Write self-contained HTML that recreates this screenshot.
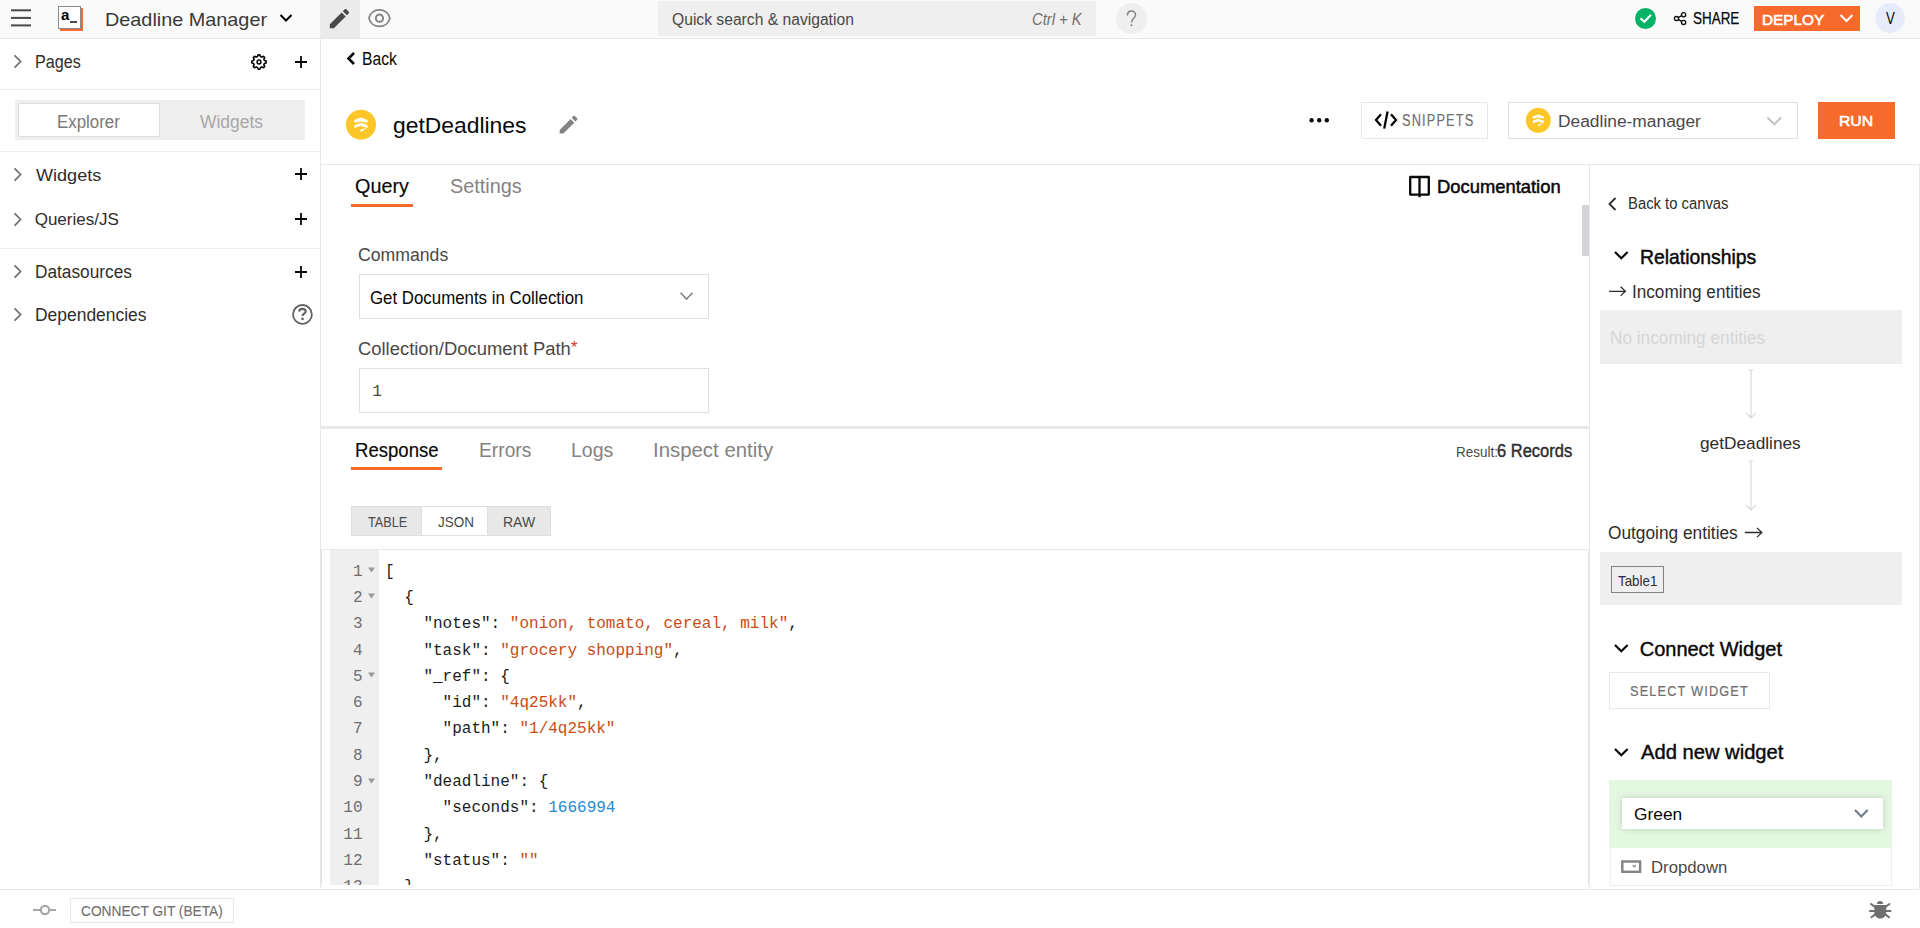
<!DOCTYPE html><html><head><meta charset='utf-8'><style>
html,body{margin:0;padding:0;width:1920px;height:928px;overflow:hidden;background:#fff;font-family:"Liberation Sans",sans-serif}
.b{position:absolute;display:block}
.t{position:absolute;white-space:pre}
</style></head><body>
<div class='b' style='left:0px;top:0px;width:1920px;height:38px;background:#fafafa'></div>
<div class='b' style='left:0px;top:38px;width:1920px;height:1px;background:#e8e8e8'></div>
<div class='b' style='left:320px;top:0px;width:40px;height:38px;background:#ebebeb'></div>
<div class='b' style='left:658px;top:1px;width:438px;height:35px;background:#efefef'></div>
<svg class='b' style='left:1116px;top:3px' width='31' height='31' viewBox='0 0 31 31'><circle cx='15.5' cy='15.5' r='15.5' fill='#efefef'/></svg>
<div class='b' style='left:320px;top:39px;width:1px;height:849px;background:#e8e8e8'></div>
<div class='b' style='left:0px;top:89px;width:320px;height:1px;background:#efefef'></div>
<div class='b' style='left:15px;top:100px;width:290px;height:40px;background:#efefef'></div>
<div class='b' style='left:18px;top:103px;width:142px;height:34px;background:#fff;box-sizing:border-box;border:1px solid #e0dede'></div>
<div class='b' style='left:0px;top:151px;width:320px;height:1px;background:#efefef'></div>
<div class='b' style='left:0px;top:248px;width:320px;height:1px;background:#efefef'></div>
<div class='b' style='left:321px;top:164px;width:1599px;height:1px;background:#e8e8e8'></div>
<div class='b' style='left:1589px;top:165px;width:1px;height:724px;background:#e8e8e8'></div>
<div class='b' style='left:1919px;top:165px;width:1px;height:724px;background:#e8e8e8'></div>
<div class='b' style='left:1582px;top:205px;width:7px;height:51px;background:#d4d4d9'></div>
<div class='b' style='left:351px;top:204px;width:62px;height:3px;background:#f86a2b'></div>
<div class='b' style='left:359px;top:274px;width:350px;height:45px;box-sizing:border-box;border:1px solid #e0dede'></div>
<div class='b' style='left:359px;top:368px;width:350px;height:45px;box-sizing:border-box;border:1px solid #e0dede'></div>
<div class='b' style='left:321px;top:426px;width:1268px;height:3px;background:#e8e8e8'></div>
<div class='b' style='left:351px;top:467px;width:91px;height:3px;background:#f86a2b'></div>
<div class='b' style='left:351px;top:506px;width:200px;height:30px;background:#e8e8e8;box-sizing:border-box;border:1px solid #e0dede'></div>
<div class='b' style='left:422px;top:507px;width:65px;height:28px;background:#fff'></div>
<div class='b' style='left:421px;top:507px;width:1px;height:28px;background:#e0dede'></div>
<div class='b' style='left:487px;top:507px;width:1px;height:28px;background:#e0dede'></div>
<div class='b' style='left:321px;top:549px;width:1268px;height:1px;background:#e8e8e8'></div>
<div class='b' style='left:330px;top:550px;width:49px;height:335px;background:#efefef'></div>
<div class='b' style='left:0px;top:889px;width:1920px;height:1px;background:#e8e8e8'></div>
<div class='b' style='left:321px;top:550px;width:1px;height:335px;background:#e4e4e8'></div>
<div class='b' style='left:1588px;top:550px;width:1px;height:335px;background:#e4e4e8'></div>
<div class='b' style='left:1361px;top:102px;width:127px;height:37px;box-sizing:border-box;border:1px solid #e8e8e8'></div>
<div class='b' style='left:1508px;top:102px;width:290px;height:37px;box-sizing:border-box;border:1px solid #e0dede'></div>
<div class='b' style='left:1818px;top:102px;width:77px;height:37px;background:#f86a2b'></div>
<div class='b' style='left:1754px;top:6px;width:106px;height:25px;background:#f86a2b'></div>
<svg class='b' style='left:1875px;top:3px' width='30' height='30' viewBox='0 0 30 30'><circle cx='15' cy='15' r='15' fill='#e8ecfa'/></svg>
<div class='b' style='left:1600px;top:310px;width:302px;height:54px;background:#efefef'></div>
<div class='b' style='left:1600px;top:552px;width:302px;height:53px;background:#efefef'></div>
<div class='b' style='left:1611px;top:566px;width:53px;height:27px;box-sizing:border-box;border:1px solid #858282'></div>
<div class='b' style='left:1609px;top:672px;width:161px;height:37px;box-sizing:border-box;border:1px solid #e8e8e8'></div>
<div class='b' style='left:1609px;top:780px;width:283px;height:68px;background:#e4f7e0'></div>
<div class='b' style='left:1622px;top:798px;width:261px;height:31px;background:#fff;box-shadow:0 0 7px rgba(0,0,0,0.16)'></div>
<div class='b' style='left:1610px;top:848px;width:282px;height:38px;box-sizing:border-box;border:1px solid #efefef;border-top:none;background:#fff'></div>
<div class='b' style='left:70px;top:898px;width:164px;height:25px;box-sizing:border-box;border:1px solid #e8e8e8'></div>
<svg class='b' style='left:11px;top:9px' width='20' height='18' viewBox='0 0 20 18'><rect x='0' y='0.3' width='20' height='2' fill='#4b4848'/><rect x='0' y='7.9' width='20' height='2' fill='#4b4848'/><rect x='0' y='15.4' width='20' height='2' fill='#4b4848'/></svg>
<div class='b' style='left:60px;top:8px;width:23px;height:23px;background:#f86a2b'></div>
<div class='b' style='left:58px;top:6px;width:23px;height:23px;background:#fff;box-sizing:border-box;border:1px solid #8a8888'></div>
<div class='t' style='left:61px;top:7px;font:bold 15px/15px "Liberation Sans";color:#000'>a</div>
<div class='b' style='left:70px;top:21px;width:7px;height:2px;background:#4b4848'></div>
<svg class='b' style='left:279px;top:13px' width='14' height='10' viewBox='0 0 14 10'><path d='M1.5 2 L7 7.5 L12.5 2' fill='none' stroke='#000' stroke-width='2'/></svg>
<svg class='b' style='left:320px;top:0px' width='40' height='38' viewBox='320 0 40 38'><g transform='translate(326.6,5.8) scale(1.073)' fill='#4b4848'><path d='M3 17.25V21h3.75L17.81 9.94l-3.75-3.75L3 17.25z'/><path d='M20.71 7.04c.39-.39.39-1.02 0-1.41l-2.34-2.34c-.39-.39-1.02-.39-1.41 0l-1.83 1.83 3.75 3.75 1.83-1.83z'/></g></svg>
<svg class='b' style='left:367px;top:7px' width='25' height='23' viewBox='0 0 25 23'><path d='M1.9 11.15 C4.6 0.15 20.2 0.15 22.9 11.15 C20.2 22.15 4.6 22.15 1.9 11.15 Z' fill='none' stroke='#858282' stroke-width='1.8'/><circle cx='12.45' cy='11.15' r='3.6' fill='none' stroke='#858282' stroke-width='2'/></svg>
<svg class='b' style='left:1110px;top:0px' width='40' height='38' viewBox='1110 0 40 38'><path d='M1127.4 15.6 C1127.4 12.4 1129.4 10.9 1131.4 10.9 C1133.6 10.9 1135.5 12.5 1135.5 14.9 C1135.5 17.9 1131.5 18.8 1131.5 22.4' fill='none' stroke='#858282' stroke-width='1.5'/><circle cx='1131.5' cy='25.3' r='1.05' fill='#858282'/></svg>
<svg class='b' style='left:1634px;top:7px' width='23' height='23' viewBox='0 0 23 23'><circle cx='11.5' cy='11.5' r='10.5' fill='#03b365'/><path d='M6.5 11.3 L10.4 14.8 L17 7.8' fill='none' stroke='#fff' stroke-width='2.2'/></svg>
<svg class='b' style='left:1672px;top:11px' width='16' height='16' viewBox='0 0 16 16'><g fill='none' stroke='#090707' stroke-width='1.35'><circle cx='11.6' cy='3.7' r='2.1'/><circle cx='4.5' cy='7.55' r='2.1'/><circle cx='11.6' cy='11.4' r='2.1'/><path d='M6.4 6.5 L9.7 4.7 M6.4 8.6 L9.7 10.4'/></g></svg>
<svg class='b' style='left:1839px;top:13px' width='15' height='10' viewBox='0 0 15 10'><path d='M1.5 2 L7.5 8 L13.5 2' fill='none' stroke='#fff' stroke-width='2'/></svg>
<svg class='b' style='left:345px;top:51px' width='12' height='15' viewBox='0 0 12 15'><path d='M9 2 L3.5 7.5 L9 13' fill='none' stroke='#090707' stroke-width='2.6'/></svg>
<svg class='b' style='left:344px;top:108px' width='34' height='34' viewBox='0 0 34 34'><circle cx='17' cy='16.7' r='15' fill='#ffc629'/><g transform='translate(2.0,1.6999999999999993) scale(1.0)' fill='#fff'><path d='M8.3 10.4 L15 7.9 L21.6 10.4 L21.6 13.1 L15 11.7 L8.3 13.1 Z'/><path d='M8.3 15.6 L15 13.1 L21.6 15.6 L21.6 18.4 L15 16.4 L8.3 18.4 Z'/><path d='M14.7 19.6 L20.6 18.6 L14.7 22.5 Z'/></g></svg>
<svg class='b' style='left:1524px;top:106px' width='29' height='29' viewBox='0 0 29 29'><circle cx='14.3' cy='14.3' r='12.5' fill='#ffc629'/><g transform='translate(1.8000000000000007,1.8000000000000007) scale(0.8333333333333334)' fill='#fff'><path d='M8.3 10.4 L15 7.9 L21.6 10.4 L21.6 13.1 L15 11.7 L8.3 13.1 Z'/><path d='M8.3 15.6 L15 13.1 L21.6 15.6 L21.6 18.4 L15 16.4 L8.3 18.4 Z'/><path d='M14.7 19.6 L20.6 18.6 L14.7 22.5 Z'/></g></svg>
<svg class='b' style='left:550px;top:108px' width='36' height='32' viewBox='550 108 36 32'><g transform='translate(556.7,112.8) scale(0.99)' fill='#858282'><path d='M3 17.25V21h3.75L17.81 9.94l-3.75-3.75L3 17.25z'/><path d='M20.71 7.04c.39-.39.39-1.02 0-1.41l-2.34-2.34c-.39-.39-1.02-.39-1.41 0l-1.83 1.83 3.75 3.75 1.83-1.83z'/></g></svg>
<svg class='b' style='left:1309px;top:117px' width='22' height='7' viewBox='0 0 22 7'><circle cx='2.6' cy='3.3' r='2.2' fill='#090707'/><circle cx='10.2' cy='3.3' r='2.2' fill='#090707'/><circle cx='17.8' cy='3.3' r='2.2' fill='#090707'/></svg>
<svg class='b' style='left:1374px;top:110px' width='24' height='20' viewBox='0 0 24 20'><path d='M7 4.2 L2 10 L7 15.8 M17 4.2 L22 10 L17 15.8' fill='none' stroke='#090707' stroke-width='2.3'/><path d='M13.6 1.5 L10.2 18.6' stroke='#090707' stroke-width='2.3'/></svg>
<svg class='b' style='left:1766px;top:115px' width='17' height='12' viewBox='0 0 17 12'><path d='M1.5 2.5 L8.3 9.3 L15 2.5' fill='none' stroke='#c4c4c4' stroke-width='2.2'/></svg>
<svg class='b' style='left:1408px;top:175px' width='24' height='23' viewBox='0 0 24 23'><path d='M2.2 2 H11.5 V19.6 H2.2 Z M11.5 2 H20.8 V19.6 H11.5' fill='none' stroke='#090707' stroke-width='2.3' stroke-linejoin='round'/><path d='M11.5 19 V22.2' stroke='#090707' stroke-width='2.3'/></svg>
<svg class='b' style='left:679px;top:291px' width='15' height='11' viewBox='0 0 15 11'><path d='M1.5 1.7 L7.5 8 L13.5 1.7' fill='none' stroke='#858282' stroke-width='1.6'/></svg>
<svg class='b' style='left:12px;top:54px' width='11' height='15' viewBox='0 0 11 15'><path d='M2.6 1.3 L8.6 7.5 L2.6 13.7' fill='none' stroke='#716e6e' stroke-width='1.7'/></svg>
<svg class='b' style='left:12px;top:167px' width='11' height='15' viewBox='0 0 11 15'><path d='M2.6 1.3 L8.6 7.5 L2.6 13.7' fill='none' stroke='#716e6e' stroke-width='1.7'/></svg>
<svg class='b' style='left:12px;top:212px' width='11' height='15' viewBox='0 0 11 15'><path d='M2.6 1.3 L8.6 7.5 L2.6 13.7' fill='none' stroke='#716e6e' stroke-width='1.7'/></svg>
<svg class='b' style='left:12px;top:264px' width='11' height='15' viewBox='0 0 11 15'><path d='M2.6 1.3 L8.6 7.5 L2.6 13.7' fill='none' stroke='#716e6e' stroke-width='1.7'/></svg>
<svg class='b' style='left:12px;top:307px' width='11' height='15' viewBox='0 0 11 15'><path d='M2.6 1.3 L8.6 7.5 L2.6 13.7' fill='none' stroke='#716e6e' stroke-width='1.7'/></svg>
<svg class='b' style='left:295px;top:56px' width='12' height='12' viewBox='0 0 12 12'><path d='M6 0 V12 M0 6 H12' stroke='#090707' stroke-width='1.8'/></svg>
<svg class='b' style='left:295px;top:168px' width='12' height='12' viewBox='0 0 12 12'><path d='M6 0 V12 M0 6 H12' stroke='#090707' stroke-width='1.8'/></svg>
<svg class='b' style='left:295px;top:213px' width='12' height='12' viewBox='0 0 12 12'><path d='M6 0 V12 M0 6 H12' stroke='#090707' stroke-width='1.8'/></svg>
<svg class='b' style='left:295px;top:266px' width='12' height='12' viewBox='0 0 12 12'><path d='M6 0 V12 M0 6 H12' stroke='#090707' stroke-width='1.8'/></svg>
<svg class='b' style='left:251px;top:54px' width='16' height='16' viewBox='0 0 16 16'><g transform='translate(8,8)'><polygon points='7.20,0.00 7.14,0.94 5.41,1.45 5.17,2.14 4.85,2.80 5.71,4.38 5.09,5.09 4.38,5.71 2.80,4.85 2.14,5.17 1.45,5.41 0.94,7.14 0.00,7.20 -0.94,7.14 -1.45,5.41 -2.14,5.17 -2.80,4.85 -4.38,5.71 -5.09,5.09 -5.71,4.38 -4.85,2.80 -5.17,2.14 -5.41,1.45 -7.14,0.94 -7.20,0.00 -7.14,-0.94 -5.41,-1.45 -5.17,-2.14 -4.85,-2.80 -5.71,-4.38 -5.09,-5.09 -4.38,-5.71 -2.80,-4.85 -2.14,-5.17 -1.45,-5.41 -0.94,-7.14 -0.00,-7.20 0.94,-7.14 1.45,-5.41 2.14,-5.17 2.80,-4.85 4.38,-5.71 5.09,-5.09 5.71,-4.38 4.85,-2.80 5.17,-2.14 5.41,-1.45 7.14,-0.94' fill='none' stroke='#090707' stroke-width='1.6' stroke-linejoin='round'/><circle cx='0' cy='0' r='1.9' fill='none' stroke='#090707' stroke-width='1.5'/></g></svg>
<svg class='b' style='left:291px;top:304px' width='22' height='22' viewBox='0 0 22 22'><circle cx='11.45' cy='10.4' r='9.4' fill='none' stroke='#646161' stroke-width='1.8'/><path d='M8.2 7.6 C8.2 5.8 9.6 4.9 11.5 4.9 C13.4 4.9 14.7 5.9 14.7 7.5 C14.7 9.4 11.5 9.9 11.5 11.9' fill='none' stroke='#646161' stroke-width='2.1'/><circle cx='11.5' cy='14.9' r='1.3' fill='#646161'/></svg>
<svg class='b' style='left:1606px;top:196px' width='13' height='16' viewBox='0 0 13 16'><path d='M9.5 2 L3.5 8 L9.5 14' fill='none' stroke='#302d2d' stroke-width='1.8'/></svg>
<svg class='b' style='left:1613px;top:250px' width='17' height='12' viewBox='0 0 17 12'><path d='M2 2 L8.3 8.3 L14.6 2' fill='none' stroke='#090707' stroke-width='2.2'/></svg>
<svg class='b' style='left:1613px;top:643px' width='17' height='12' viewBox='0 0 17 12'><path d='M2 2 L8.3 8.3 L14.6 2' fill='none' stroke='#090707' stroke-width='2.2'/></svg>
<svg class='b' style='left:1613px;top:747px' width='17' height='12' viewBox='0 0 17 12'><path d='M2 2 L8.3 8.3 L14.6 2' fill='none' stroke='#090707' stroke-width='2.2'/></svg>
<svg class='b' style='left:1608px;top:285px' width='19' height='13' viewBox='0 0 19 13'><path d='M1 6.3 H17.4 M12.6 1.7 L17.4 6.3 L12.6 10.9' fill='none' stroke='#302d2d' stroke-width='1.3'/></svg>
<svg class='b' style='left:1744px;top:526px' width='19' height='13' viewBox='0 0 19 13'><path d='M0.8 6.5 H17.8 M13 1.9 L17.8 6.5 L13 11.1' fill='none' stroke='#302d2d' stroke-width='1.3'/></svg>
<svg class='b' style='left:1744px;top:369px' width='14' height='50' viewBox='0 0 14 50'><path d='M7 1 V49 M4.5 1 H9.5 M2 44 L7 49 L12 44' fill='none' stroke='#d9d9d9' stroke-width='1.2'/></svg>
<svg class='b' style='left:1744px;top:460px' width='14' height='51' viewBox='0 0 14 51'><path d='M7 1 V50 M4.5 1 H9.5 M2 45 L7 50 L12 45' fill='none' stroke='#d9d9d9' stroke-width='1.2'/></svg>
<svg class='b' style='left:1853px;top:808px' width='17' height='12' viewBox='0 0 17 12'><path d='M2 2 L8.3 8.5 L14.6 2' fill='none' stroke='#737c8b' stroke-width='2.2'/></svg>
<svg class='b' style='left:1620px;top:859px' width='23' height='15' viewBox='0 0 23 15'><rect x='2.3' y='2.5' width='17.8' height='10.3' fill='none' stroke='#858282' stroke-width='2.4'/><path d='M12.6 6.2 L14.3 7.9 L16 6.2' fill='none' stroke='#858282' stroke-width='1.1'/></svg>
<svg class='b' style='left:33px;top:902px' width='24' height='16' viewBox='0 0 24 16'><path d='M0 8 H7 M17 8 H23' stroke='#a9a7a7' stroke-width='2'/><circle cx='12' cy='8' r='4.2' fill='none' stroke='#a9a7a7' stroke-width='2.2'/></svg>
<svg class='b' style='left:1868px;top:899px' width='24' height='22' viewBox='0 0 24 22'><g fill='#716e6e'><path d='M9 4.9 A3.05 2.9 0 0 1 15.1 4.9 Z'/><path d='M6.3 6.1 H18.2 V13 C18.2 17 15.5 19.6 12.25 19.6 C9 19.6 6.3 17 6.3 13 Z'/></g><path d='M3 5 L6.8 7.6 M21.5 5 L17.7 7.6 M2 12 H6.5 M22.5 12 H18 M3.4 18.3 L7 15.6 M21.1 18.3 L17.5 15.6' stroke='#716e6e' stroke-width='2' stroke-linecap='round'/></svg>
<div class='b' style='left:321px;top:550px;width:1268px;height:335px;overflow:hidden'><div class='t' style='left:64.0px;top:13.6px;font:16px/16px "Liberation Mono",monospace'><span style='color:#1c1c1c'>[</span></div><div class='t' style='left:31.9px;top:13.6px;font:16px/16px "Liberation Mono",monospace;color:#716e6e'>1</div><svg class='b' style='left:46px;top:17.1px' width='9' height='6'><path d='M1 0.5 H8 L4.5 5.5 Z' fill='#999'/></svg><div class='t' style='left:64.0px;top:39.9px;font:16px/16px "Liberation Mono",monospace'><span style='color:#1c1c1c'>  {</span></div><div class='t' style='left:31.9px;top:39.9px;font:16px/16px "Liberation Mono",monospace;color:#716e6e'>2</div><svg class='b' style='left:46px;top:43.4px' width='9' height='6'><path d='M1 0.5 H8 L4.5 5.5 Z' fill='#999'/></svg><div class='t' style='left:64.0px;top:66.2px;font:16px/16px "Liberation Mono",monospace'><span style='color:#1c1c1c'>    &quot;notes&quot;: </span><span style='color:#cb4b16'>&quot;onion, tomato, cereal, milk&quot;</span><span style='color:#1c1c1c'>,</span></div><div class='t' style='left:31.9px;top:66.2px;font:16px/16px "Liberation Mono",monospace;color:#716e6e'>3</div><div class='t' style='left:64.0px;top:92.5px;font:16px/16px "Liberation Mono",monospace'><span style='color:#1c1c1c'>    &quot;task&quot;: </span><span style='color:#cb4b16'>&quot;grocery shopping&quot;</span><span style='color:#1c1c1c'>,</span></div><div class='t' style='left:31.9px;top:92.5px;font:16px/16px "Liberation Mono",monospace;color:#716e6e'>4</div><div class='t' style='left:64.0px;top:118.8px;font:16px/16px "Liberation Mono",monospace'><span style='color:#1c1c1c'>    &quot;_ref&quot;: {</span></div><div class='t' style='left:31.9px;top:118.8px;font:16px/16px "Liberation Mono",monospace;color:#716e6e'>5</div><svg class='b' style='left:46px;top:122.3px' width='9' height='6'><path d='M1 0.5 H8 L4.5 5.5 Z' fill='#999'/></svg><div class='t' style='left:64.0px;top:145.1px;font:16px/16px "Liberation Mono",monospace'><span style='color:#1c1c1c'>      &quot;id&quot;: </span><span style='color:#cb4b16'>&quot;4q25kk&quot;</span><span style='color:#1c1c1c'>,</span></div><div class='t' style='left:31.9px;top:145.1px;font:16px/16px "Liberation Mono",monospace;color:#716e6e'>6</div><div class='t' style='left:64.0px;top:171.4px;font:16px/16px "Liberation Mono",monospace'><span style='color:#1c1c1c'>      &quot;path&quot;: </span><span style='color:#cb4b16'>&quot;1/4q25kk&quot;</span></div><div class='t' style='left:31.9px;top:171.4px;font:16px/16px "Liberation Mono",monospace;color:#716e6e'>7</div><div class='t' style='left:64.0px;top:197.7px;font:16px/16px "Liberation Mono",monospace'><span style='color:#1c1c1c'>    },</span></div><div class='t' style='left:31.9px;top:197.7px;font:16px/16px "Liberation Mono",monospace;color:#716e6e'>8</div><div class='t' style='left:64.0px;top:224.0px;font:16px/16px "Liberation Mono",monospace'><span style='color:#1c1c1c'>    &quot;deadline&quot;: {</span></div><div class='t' style='left:31.9px;top:224.0px;font:16px/16px "Liberation Mono",monospace;color:#716e6e'>9</div><svg class='b' style='left:46px;top:227.5px' width='9' height='6'><path d='M1 0.5 H8 L4.5 5.5 Z' fill='#999'/></svg><div class='t' style='left:64.0px;top:250.3px;font:16px/16px "Liberation Mono",monospace'><span style='color:#1c1c1c'>      &quot;seconds&quot;: </span><span style='color:#268bd2'>1666994</span></div><div class='t' style='left:22.3px;top:250.3px;font:16px/16px "Liberation Mono",monospace;color:#716e6e'>10</div><div class='t' style='left:64.0px;top:276.6px;font:16px/16px "Liberation Mono",monospace'><span style='color:#1c1c1c'>    },</span></div><div class='t' style='left:22.3px;top:276.6px;font:16px/16px "Liberation Mono",monospace;color:#716e6e'>11</div><div class='t' style='left:64.0px;top:302.9px;font:16px/16px "Liberation Mono",monospace'><span style='color:#1c1c1c'>    &quot;status&quot;: </span><span style='color:#cb4b16'>&quot;&quot;</span></div><div class='t' style='left:22.3px;top:302.9px;font:16px/16px "Liberation Mono",monospace;color:#716e6e'>12</div><div class='t' style='left:64.0px;top:329.2px;font:16px/16px "Liberation Mono",monospace'><span style='color:#1c1c1c'>  },</span></div><div class='t' style='left:22.3px;top:329.2px;font:16px/16px "Liberation Mono",monospace;color:#716e6e'>13</div></div>
<div class='t' style='left:104.96px;top:9.70px;color:#393939;font-family:"Liberation Sans", sans-serif;font-size:19px;line-height:19px;font-weight:normal;transform:scaleX(1.0435);transform-origin:0 0;'>Deadline Manager</div>
<div class='t' style='left:671.72px;top:12.00px;color:#4b4848;font-family:"Liberation Sans", sans-serif;font-size:16px;line-height:16px;font-weight:normal;transform:scaleX(0.9783);transform-origin:0 0;'>Quick search &amp; navigation</div>
<div class='t' style='left:1032.08px;top:12.00px;color:#716e6e;font-family:"Liberation Sans", sans-serif;font-size:16px;line-height:16px;font-weight:normal;font-style:italic;transform:scaleX(0.9245);transform-origin:0 0;'>Ctrl + K</div>
<div class='t' style='left:1692.56px;top:11.20px;color:#090707;font-family:"Liberation Sans", sans-serif;font-size:16px;line-height:16px;font-weight:normal;-webkit-text-stroke:0.25px currentColor;transform:scaleX(0.8398);transform-origin:0 0;'>SHARE</div>
<div class='t' style='left:1762.38px;top:12.00px;color:#fff;font-family:"Liberation Sans", sans-serif;font-size:15px;line-height:15px;font-weight:normal;-webkit-text-stroke:0.6px currentColor;transform:scaleX(1.0217);transform-origin:0 0;'>DEPLOY</div>
<div class='t' style='left:1885.60px;top:11.20px;color:#090707;font-family:"Liberation Sans", sans-serif;font-size:16px;line-height:16px;font-weight:normal;transform:scaleX(0.8273);transform-origin:0 0;'>V</div>
<div class='t' style='left:35.30px;top:52.70px;color:#302d2d;font-family:"Liberation Sans", sans-serif;font-size:18px;line-height:18px;font-weight:normal;transform:scaleX(0.8960);transform-origin:0 0;'>Pages</div>
<div class='t' style='left:57.36px;top:113.30px;color:#7a7777;font-family:"Liberation Sans", sans-serif;font-size:18px;line-height:18px;font-weight:normal;transform:scaleX(0.9379);transform-origin:0 0;'>Explorer</div>
<div class='t' style='left:200.00px;top:113.30px;color:#a9a7a7;font-family:"Liberation Sans", sans-serif;font-size:18px;line-height:18px;font-weight:normal;transform:scaleX(0.9692);transform-origin:0 0;'>Widgets</div>
<div class='t' style='left:35.70px;top:166.50px;color:#302d2d;font-family:"Liberation Sans", sans-serif;font-size:17px;line-height:17px;font-weight:normal;transform:scaleX(1.0623);transform-origin:0 0;'>Widgets</div>
<div class='t' style='left:34.70px;top:211.30px;color:#302d2d;font-family:"Liberation Sans", sans-serif;font-size:17px;line-height:17px;font-weight:normal;'>Queries/JS</div>
<div class='t' style='left:34.84px;top:262.80px;color:#302d2d;font-family:"Liberation Sans", sans-serif;font-size:18px;line-height:18px;font-weight:normal;transform:scaleX(0.9590);transform-origin:0 0;'>Datasources</div>
<div class='t' style='left:34.83px;top:305.80px;color:#302d2d;font-family:"Liberation Sans", sans-serif;font-size:18px;line-height:18px;font-weight:normal;transform:scaleX(0.9693);transform-origin:0 0;'>Dependencies</div>
<div class='t' style='left:361.53px;top:49.80px;color:#090707;font-family:"Liberation Sans", sans-serif;font-size:18px;line-height:18px;font-weight:normal;transform:scaleX(0.8718);transform-origin:0 0;'>Back</div>
<div class='t' style='left:392.96px;top:114.60px;color:#090707;font-family:"Liberation Sans", sans-serif;font-size:22px;line-height:22px;font-weight:normal;transform:scaleX(1.0394);transform-origin:0 0;'>getDeadlines</div>
<div class='t' style='left:1402.20px;top:112.80px;color:#716e6e;font-family:"Liberation Sans", sans-serif;font-size:16px;line-height:16px;font-weight:normal;letter-spacing:1.411px;-webkit-text-stroke:0.15px currentColor;transform:scaleX(0.8000);transform-origin:0 0;'>SNIPPETS</div>
<div class='t' style='left:1558.41px;top:114.00px;color:#4b4848;font-family:"Liberation Sans", sans-serif;font-size:16px;line-height:16px;font-weight:normal;transform:scaleX(1.0855);transform-origin:0 0;'>Deadline-manager</div>
<div class='t' style='left:1838.95px;top:112.80px;color:#fff;font-family:"Liberation Sans", sans-serif;font-size:15px;line-height:15px;font-weight:normal;-webkit-text-stroke:0.6px currentColor;transform:scaleX(1.0484);transform-origin:0 0;'>RUN</div>
<div class='t' style='left:354.81px;top:175.70px;color:#090707;font-family:"Liberation Sans", sans-serif;font-size:20px;line-height:20px;font-weight:normal;-webkit-text-stroke:0.15px currentColor;transform:scaleX(0.9889);transform-origin:0 0;'>Query</div>
<div class='t' style='left:450.21px;top:175.70px;color:#858282;font-family:"Liberation Sans", sans-serif;font-size:20px;line-height:20px;font-weight:normal;transform:scaleX(0.9930);transform-origin:0 0;'>Settings</div>
<div class='t' style='left:1436.53px;top:176.70px;color:#090707;font-family:"Liberation Sans", sans-serif;font-size:19px;line-height:19px;font-weight:normal;-webkit-text-stroke:0.5px currentColor;transform:scaleX(0.9675);transform-origin:0 0;'>Documentation</div>
<div class='t' style='left:358.32px;top:245.70px;color:#4b4848;font-family:"Liberation Sans", sans-serif;font-size:18px;line-height:18px;font-weight:normal;transform:scaleX(0.9802);transform-origin:0 0;'>Commands</div>
<div class='t' style='left:369.51px;top:288.00px;color:#090707;font-family:"Liberation Sans", sans-serif;font-size:19px;line-height:19px;font-weight:normal;transform:scaleX(0.8866);transform-origin:0 0;'>Get Documents in Collection</div>
<div class='t' style='left:358.28px;top:340.40px;color:#4b4848;font-family:"Liberation Sans", sans-serif;font-size:18px;line-height:18px;font-weight:normal;transform:scaleX(1.0228);transform-origin:0 0;'>Collection/Document Path</div>
<div class='t' style='left:571.00px;top:340.00px;color:#e22c2c;font-family:"Liberation Sans", sans-serif;font-size:16px;line-height:16px;font-weight:normal;transform:scaleX(1.0500);transform-origin:0 0;'>*</div>
<div class='t' style='left:372.30px;top:383.70px;color:#4b4848;font-family:"Liberation Mono", monospace;font-size:16px;line-height:16px;font-weight:normal;'>1</div>
<div class='t' style='left:354.87px;top:440.30px;color:#090707;font-family:"Liberation Sans", sans-serif;font-size:20px;line-height:20px;font-weight:normal;-webkit-text-stroke:0.15px currentColor;transform:scaleX(0.9281);transform-origin:0 0;'>Response</div>
<div class='t' style='left:479.18px;top:440.30px;color:#858282;font-family:"Liberation Sans", sans-serif;font-size:20px;line-height:20px;font-weight:normal;transform:scaleX(0.9615);transform-origin:0 0;'>Errors</div>
<div class='t' style='left:571.30px;top:440.30px;color:#858282;font-family:"Liberation Sans", sans-serif;font-size:20px;line-height:20px;font-weight:normal;transform:scaleX(0.9756);transform-origin:0 0;'>Logs</div>
<div class='t' style='left:653.46px;top:440.30px;color:#858282;font-family:"Liberation Sans", sans-serif;font-size:20px;line-height:20px;font-weight:normal;transform:scaleX(1.0194);transform-origin:0 0;'>Inspect entity</div>
<div class='t' style='left:1456.20px;top:443.80px;color:#4b4848;font-family:"Liberation Sans", sans-serif;font-size:15px;line-height:15px;font-weight:normal;transform:scaleX(0.8978);transform-origin:0 0;'>Result:</div>
<div class='t' style='left:1497.38px;top:441.80px;color:#302d2d;font-family:"Liberation Sans", sans-serif;font-size:18px;line-height:18px;font-weight:normal;-webkit-text-stroke:0.45px currentColor;transform:scaleX(0.9160);transform-origin:0 0;'>6 Records</div>
<div class='t' style='left:368.00px;top:514.00px;color:#4b4848;font-family:"Liberation Sans", sans-serif;font-size:15px;line-height:15px;font-weight:normal;transform:scaleX(0.8478);transform-origin:0 0;'>TABLE</div>
<div class='t' style='left:437.50px;top:514.00px;color:#4b4848;font-family:"Liberation Sans", sans-serif;font-size:15px;line-height:15px;font-weight:normal;transform:scaleX(0.8974);transform-origin:0 0;'>JSON</div>
<div class='t' style='left:502.82px;top:514.00px;color:#4b4848;font-family:"Liberation Sans", sans-serif;font-size:15px;line-height:15px;font-weight:normal;transform:scaleX(0.9318);transform-origin:0 0;'>RAW</div>
<div class='t' style='left:1628.37px;top:196.10px;color:#302d2d;font-family:"Liberation Sans", sans-serif;font-size:16px;line-height:16px;font-weight:normal;transform:scaleX(0.9262);transform-origin:0 0;'>Back to canvas</div>
<div class='t' style='left:1640.18px;top:246.00px;color:#090707;font-family:"Liberation Sans", sans-serif;font-size:21px;line-height:21px;font-weight:normal;-webkit-text-stroke:0.45px currentColor;transform:scaleX(0.9224);transform-origin:0 0;'>Relationships</div>
<div class='t' style='left:1632.09px;top:282.90px;color:#302d2d;font-family:"Liberation Sans", sans-serif;font-size:18px;line-height:18px;font-weight:normal;transform:scaleX(0.9526);transform-origin:0 0;'>Incoming entities</div>
<div class='t' style='left:1610.04px;top:328.80px;color:#d6d6d6;font-family:"Liberation Sans", sans-serif;font-size:18px;line-height:18px;font-weight:normal;transform:scaleX(0.9565);transform-origin:0 0;'>No incoming entities</div>
<div class='t' style='left:1700.18px;top:435.10px;color:#302d2d;font-family:"Liberation Sans", sans-serif;font-size:17px;line-height:17px;font-weight:normal;transform:scaleX(1.0153);transform-origin:0 0;'>getDeadlines</div>
<div class='t' style='left:1608.04px;top:523.80px;color:#302d2d;font-family:"Liberation Sans", sans-serif;font-size:18px;line-height:18px;font-weight:normal;transform:scaleX(0.9604);transform-origin:0 0;'>Outgoing entities</div>
<div class='t' style='left:1618.00px;top:573.40px;color:#302d2d;font-family:"Liberation Sans", sans-serif;font-size:15px;line-height:15px;font-weight:normal;transform:scaleX(0.8909);transform-origin:0 0;'>Table1</div>
<div class='t' style='left:1639.70px;top:639.20px;color:#090707;font-family:"Liberation Sans", sans-serif;font-size:20px;line-height:20px;font-weight:normal;-webkit-text-stroke:0.4px currentColor;'>Connect Widget</div>
<div class='t' style='left:1629.85px;top:683.30px;color:#716e6e;font-family:"Liberation Sans", sans-serif;font-size:15px;line-height:15px;font-weight:normal;letter-spacing:1.358px;-webkit-text-stroke:0.2px currentColor;transform:scaleX(0.8500);transform-origin:0 0;'>SELECT WIDGET</div>
<div class='t' style='left:1640.70px;top:742.30px;color:#090707;font-family:"Liberation Sans", sans-serif;font-size:20px;line-height:20px;font-weight:normal;-webkit-text-stroke:0.4px currentColor;transform:scaleX(1.0085);transform-origin:0 0;'>Add new widget</div>
<div class='t' style='left:1633.58px;top:806.00px;color:#090707;font-family:"Liberation Sans", sans-serif;font-size:17px;line-height:17px;font-weight:normal;transform:scaleX(1.0200);transform-origin:0 0;'>Green</div>
<div class='t' style='left:1651.42px;top:859.30px;color:#4b4848;font-family:"Liberation Sans", sans-serif;font-size:17px;line-height:17px;font-weight:normal;transform:scaleX(0.9842);transform-origin:0 0;'>Dropdown</div>
<div class='t' style='left:80.92px;top:903.90px;color:#716e6e;font-family:"Liberation Sans", sans-serif;font-size:14px;line-height:14px;font-weight:normal;-webkit-text-stroke:0.1px currentColor;transform:scaleX(0.9804);transform-origin:0 0;'>CONNECT GIT (BETA)</div>
</body></html>
